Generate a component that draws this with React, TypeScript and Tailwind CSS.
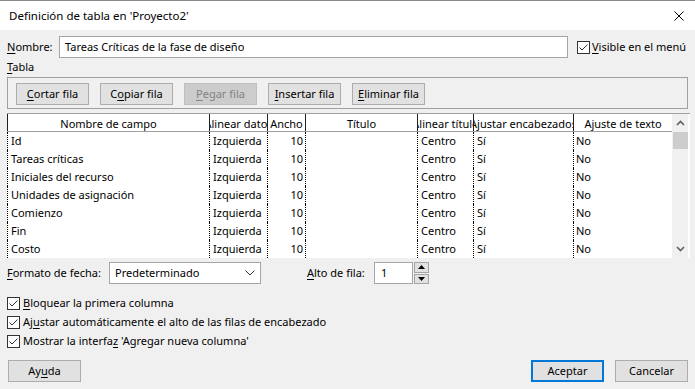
import type { ReactNode } from 'react'

const font = "font-['Noto_Sans',sans-serif]"

const columns = [
  { title: 'Nombre de campo', width: 'w-[202px]', align: 'justify-start pl-[3px]', key: 'name' },
  { title: 'Alinear datos', width: 'w-[58px]', align: 'justify-start pl-[3px]', key: 'align' },
  { title: 'Ancho', width: 'w-[38px]', align: 'justify-end pr-[2px]', key: 'width' },
  { title: 'Título', width: 'w-[112px]', align: 'justify-start pl-[3px]', key: 'title' },
  { title: 'Alinear título', width: 'w-[56px]', align: 'justify-start pl-[3px]', key: 'titleAlign' },
  { title: 'Ajustar encabezados', width: 'w-[100px]', align: 'justify-start pl-[3px]', key: 'header' },
  { title: 'Ajuste de texto', width: 'w-[99px]', align: 'justify-start pl-[2px]', key: 'wrap' },
] as const

const fields = [
  'Id',
  'Tareas críticas',
  'Iniciales del recurso',
  'Unidades de asignación',
  'Comienzo',
  'Fin',
  'Costo',
]

const rows = fields.map((name) => ({
  name,
  align: 'Izquierda',
  width: '10',
  title: '',
  titleAlign: 'Centro',
  header: 'Sí',
  wrap: 'No',
}))

function U({ children }: { children: ReactNode }) {
  return <span className="underline underline-offset-[2px] decoration-1">{children}</span>
}

function Button({
  children,
  disabled,
  primary,
}: {
  children: ReactNode
  disabled?: boolean
  primary?: boolean
}) {
  return (
    <button
      type="button"
      className={
        'flex h-[22px] w-[73px] items-center justify-center whitespace-nowrap text-[11px] ' +
        (disabled
          ? 'border border-[#bfbfbf] bg-[#cccccc] text-[#838383]'
          : primary
            ? 'border-2 border-[#0078d7] bg-[#e1e1e1] text-black'
            : 'border border-[#adadad] bg-[#e1e1e1] text-black')
      }
    >
      {children}
    </button>
  )
}

function Checkbox() {
  return (
    <span className="flex h-[13px] w-[13px] shrink-0 items-center justify-center border border-[#333333] bg-white">
      <svg width="11" height="11" viewBox="0 0 11 11">
        <path d="M1.5 5.5 L4 8 L9.5 2.5" fill="none" stroke="#333333" strokeWidth="1" />
      </svg>
    </span>
  )
}

function Chevron({ up }: { up?: boolean }) {
  return (
    <svg width="9" height="6" viewBox="0 0 9 6">
      <path
        d={up ? 'M1 5 L4.5 1.5 L8 5' : 'M1 1 L4.5 4.5 L8 1'}
        fill="none"
        stroke="#606060"
        strokeWidth="1.6"
      />
    </svg>
  )
}

export default function App() {
  return (
    <div className={`h-[389px] w-[695px] overflow-hidden whitespace-nowrap bg-[#f0f0f0] text-black ${font}`}>
      {/* title bar */}
      <div className="flex h-[30px] items-center justify-between border-t border-[#888888] bg-white pl-[9px] pr-[11px]">
        <span className="text-[11.5px]">Definición de tabla en 'Proyecto2'</span>
        <svg width="10" height="10" viewBox="0 0 10 10">
          <path d="M0.5 0.5 L9.5 9.5 M9.5 0.5 L0.5 9.5" stroke="#000" strokeWidth="1" />
        </svg>
      </div>

      <div className="flex flex-col px-[7px] text-[11px]">
        {/* name row */}
        <div className="mt-[6px] flex h-[22px] items-center">
          <span className="w-[52px]">
            <U>N</U>ombre:
          </span>
          <div className="flex h-[22px] w-[509px] items-center border border-[#a5a5a5] bg-white pl-[5px]">
            Tareas Críticas de la fase de diseño
          </div>
          <div className="ml-[9px] flex items-center gap-[2px]">
            <Checkbox />
            <span>
              <U>V</U>isible en el menú
            </span>
          </div>
        </div>

        <div className="mt-[1px] flex h-[17px] items-center">
          <span>
            <U>T</U>abla
          </span>
        </div>

        {/* button group */}
        <div className="mt-[1px] flex h-[32px] w-[681px] items-start gap-[11px] border border-[#a0a0a0] pl-[8px] pt-[5px]">
          <Button>
            <U>C</U>ortar fila
          </Button>
          <Button>
            C<U>o</U>piar fila
          </Button>
          <Button disabled>
            <U>P</U>egar fila
          </Button>
          <Button>
            <U>I</U>nsertar fila
          </Button>
          <Button>
            <U>E</U>liminar fila
          </Button>
        </div>

        {/* table */}
        <div className="mt-[4px] flex w-[683px] border-t border-[#a0a0a0] bg-white">
          <div className="flex flex-col">
            <div className="flex h-[18px] border-b border-[#a0a0a0]">
              {columns.map((col) => (
                <div
                  key={col.key}
                  className={`flex ${col.width} items-center justify-center overflow-hidden border-l border-[#222222] pt-[3px]`}
                >
                  <span className="shrink-0">{col.title}</span>
                </div>
              ))}
            </div>
            {rows.map((row) => (
              <div key={row.name} className="flex h-[18px]">
                {columns.map((col) => (
                  <div
                    key={col.key}
                    className={`flex ${col.width} ${col.align} items-center overflow-hidden border-l border-dotted border-black`}
                  >
                    {row[col.key]}
                  </div>
                ))}
              </div>
            ))}
          </div>
          <div className="flex w-[16px] flex-col items-center bg-[#f0f0f0]">
            <div className="flex h-[18px] items-center">
              <Chevron up />
            </div>
            <div className="h-[17px] w-[15px] bg-[#cdcdcd]" />
            <div className="flex-1" />
            <div className="flex h-[18px] items-center">
              <Chevron />
            </div>
          </div>
          <div className="w-[2px]" />
        </div>

        {/* date format row */}
        <div className="mt-[4px] flex h-[22px] items-center">
          <span className="w-[102px]">
            <U>F</U>ormato de fecha:
          </span>
          <div className="flex h-[22px] w-[152px] items-center justify-between border border-[#a5a5a5] bg-white pl-[5px] pr-[5px]">
            <span>Predeterminado</span>
            <svg width="10" height="6" viewBox="0 0 10 6">
              <path d="M0.5 0.5 L5 5 L9.5 0.5" fill="none" stroke="#333" strokeWidth="1" />
            </svg>
          </div>
          <span className="ml-[46px] w-[67px]">
            <U>A</U>lto de fila:
          </span>
          <div className="flex h-[22px] w-[39px] items-center border border-[#a5a5a5] bg-white pl-[6px]">1</div>
          <div className="ml-[1px] flex h-[22px] w-[15px] flex-col gap-[1px]">
            <div className="flex flex-1 items-center justify-center border border-[#a5a5a5] bg-[#e1e1e1]">
              <svg width="7" height="4" viewBox="0 0 7 4">
                <path d="M0 4 L3.5 0 L7 4 Z" fill="#000" />
              </svg>
            </div>
            <div className="flex flex-1 items-center justify-center border border-[#a5a5a5] bg-[#e1e1e1]">
              <svg width="7" height="4" viewBox="0 0 7 4">
                <path d="M0 0 L3.5 4 L7 0 Z" fill="#000" />
              </svg>
            </div>
          </div>
        </div>

        {/* checkboxes */}
        <div className="mt-[12px] flex flex-col gap-[5px]">
          <label className="flex h-[14px] items-center gap-[3px]">
            <Checkbox />
            <span>
              <U>B</U>loquear la primera columna
            </span>
          </label>
          <label className="flex h-[14px] items-center gap-[3px]">
            <Checkbox />
            <span>
              Aj<U>u</U>star automáticamente el alto de las filas de encabezado
            </span>
          </label>
          <label className="flex h-[14px] items-center gap-[3px]">
            <Checkbox />
            <span>
              Mostrar la interfa<U>z</U> 'Agregar nueva columna'
            </span>
          </label>
        </div>

        {/* footer */}
        <div className="mt-[12px] flex items-center pl-[1px]">
          <Button>
            Ay<U>u</U>da
          </Button>
          <div className="flex-1" />
          <Button primary>Aceptar</Button>
          <div className="w-[11px]" />
          <Button>Cancelar</Button>
        </div>
      </div>
    </div>
  )
}
